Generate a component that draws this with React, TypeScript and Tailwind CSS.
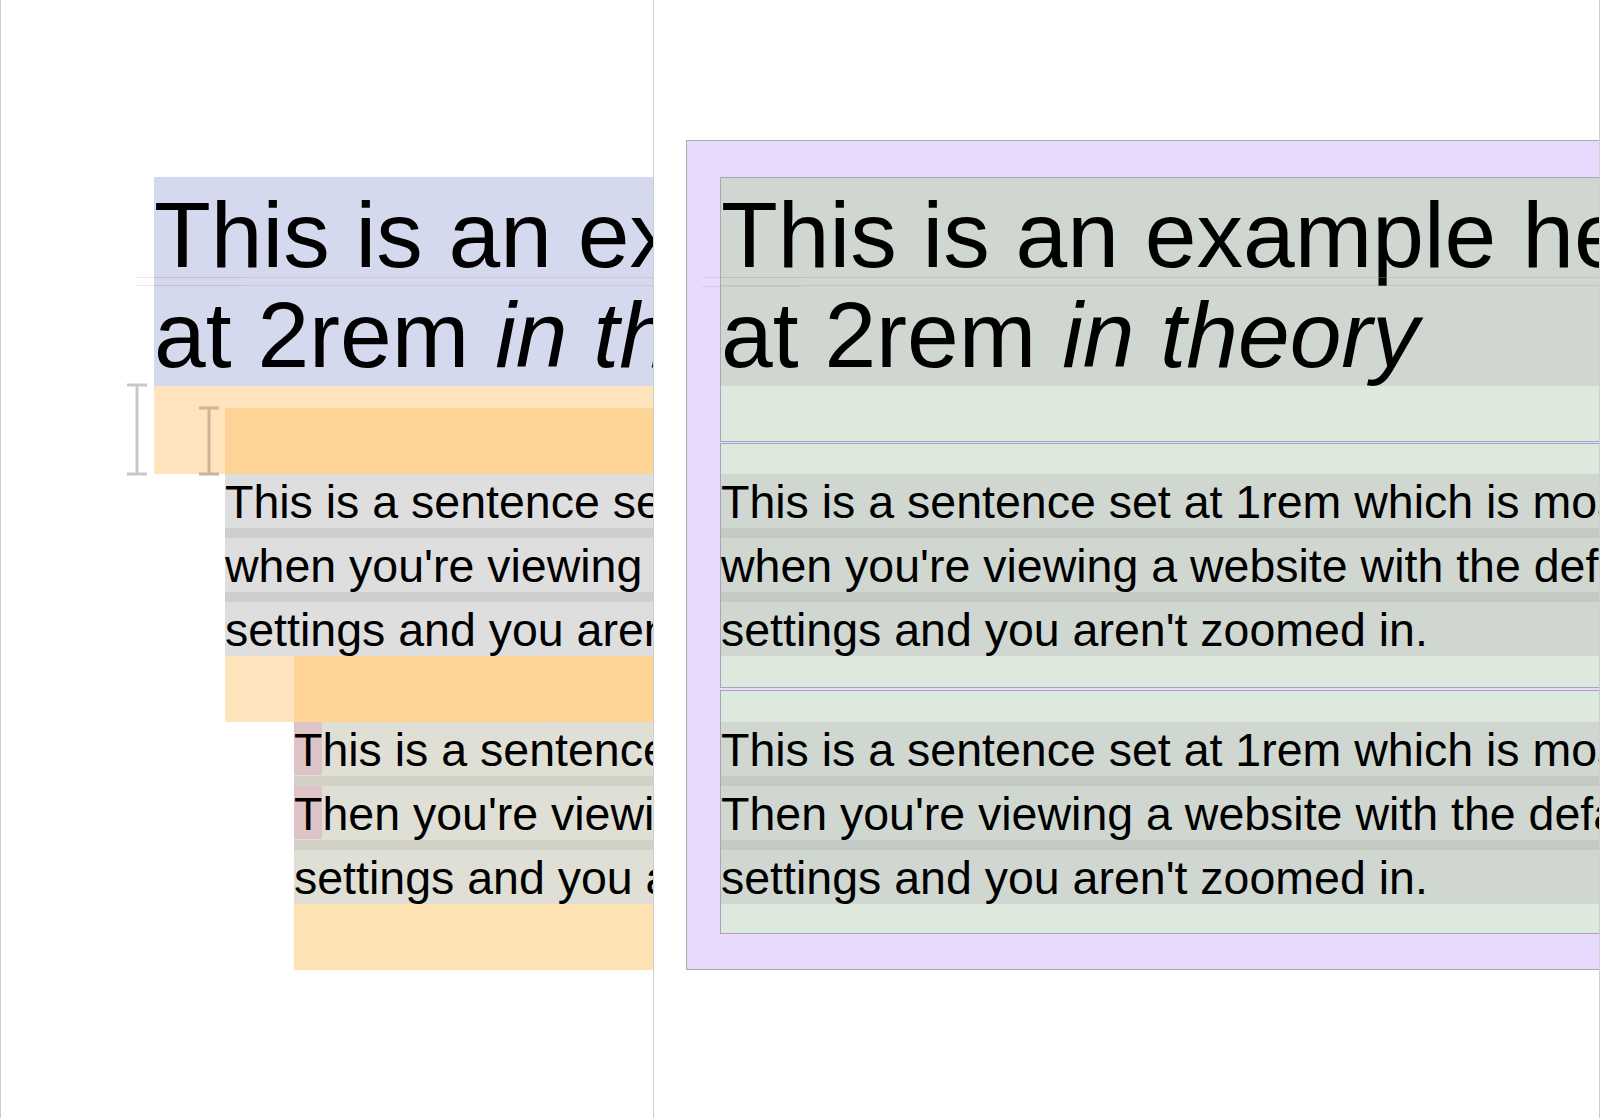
import React from "react";

const P1 = [
  "This is a sentence set at 1rem which is mostly 16px",
  "when you're viewing a website with the default",
  "settings and you aren't zoomed in.",
];
const P2 = [
  "This is a sentence set at 1rem which is mostly 16px",
  "Then you're viewing a website with the default",
  "settings and you aren't zoomed in.",
];

function Para({
  lines,
  light,
  dark,
  pinkT,
}: {
  lines: string[];
  light: string;
  dark: string;
  pinkT?: boolean;
}) {
  return (
    <div className={`flex flex-col gap-[10px] text-[46.5px] ${dark}`}>
      {lines.map((l, i) => (
        <div key={i} className={`h-[54px] leading-[56px] whitespace-nowrap ${light}`}>
          {pinkT && i < 2 ? (
            <>
              <span className="inline-block h-[53px] align-top leading-[56px] bg-[#dfc4c7]">{l[0]}</span>
              {l.slice(1)}
            </>
          ) : (
            l
          )}
        </div>
      ))}
    </div>
  );
}

function HeadingText() {
  return (
    <>
      <div>This is an example heading set</div>
      <div>
        at 2rem <em className="italic">in theory</em>
      </div>
    </>
  );
}

export default function App() {
  return (
    <div className="w-[1600px] h-[1118px] flex bg-white overflow-hidden text-black font-['Liberation_Sans',Arial,sans-serif]">
      {/* Left frame */}
      <div className="relative w-[654px] h-full shrink-0 border-l border-r border-[#cfcfcf] overflow-hidden pt-[177px]">
        <div className="pl-[153px]">
          <div className="relative h-[209px] pt-[7.5px] text-[93px] leading-[100px] whitespace-nowrap bg-[#d5d9ee]">
            <HeadingText />
            <div className="absolute left-0 right-0 top-[100px] h-px bg-[rgba(200,140,160,0.25)]" />
            <div className="absolute left-0 right-0 top-[108px] h-px bg-[rgba(200,140,160,0.25)]" />
          </div>
          <div className="bg-[#fee3bc] pt-[22px] pl-[71px]">
            <div className="h-[66px] bg-[#fed496]" />
          </div>
        </div>
        <div className="pl-[224px]">
          <Para lines={P1} light="bg-[#dedede]" dark="bg-[#cecece]" />
          <div className="bg-[#fee3bc] pl-[69px]">
            <div className="h-[66px] bg-[#fed496]" />
          </div>
        </div>
        <div className="pl-[293px]">
          <Para lines={P2} light="bg-[#dfdfd5]" dark="bg-[#d1d1c6]" pinkT />
          <div className="h-[66px] bg-[#fee2b4]" />
        </div>

        <div className="absolute left-[136px] w-[106px] top-[277px] h-px bg-[rgba(220,150,165,0.3)]" />
        <div className="absolute left-[136px] w-[106px] top-[285px] h-px bg-[rgba(220,150,165,0.3)]" />

        <svg className="absolute left-[125px] top-[383px]" width="100" height="94" viewBox="0 0 100 94">
          <g stroke="#c8c8c8" strokeWidth="3" fill="none">
            <line x1="11" y1="2" x2="11" y2="91" />
            <line x1="1" y1="2" x2="21" y2="2" />
            <line x1="1" y1="91" x2="21" y2="91" />
          </g>
          <g stroke="#c9b598" strokeWidth="3" fill="none">
            <line x1="83" y1="25" x2="83" y2="91" />
            <line x1="73" y1="25" x2="93" y2="25" />
            <line x1="73" y1="91" x2="93" y2="91" />
          </g>
        </svg>
      </div>

      {/* Right frame */}
      <div className="relative flex-1 h-full border-r border-[#cfcfcf] overflow-hidden pt-[140px] pl-[32px]">
        <div className="w-[1400px] bg-[#e8dafd] border border-[#ababab] pt-[36px] pl-[33px] pb-[35px] flex flex-col gap-[1px]">
          <div className="border border-[#a9a4b9]">
            <div className="relative h-[208px] pt-[6.5px] text-[93px] leading-[100px] whitespace-nowrap bg-[#d0d7d0]">
              <HeadingText />
              <div className="absolute left-0 right-0 top-[99px] h-px bg-[rgba(160,170,160,0.35)]" />
              <div className="absolute left-0 right-0 top-[107px] h-px bg-[rgba(160,170,160,0.35)]" />
            </div>
            <div className="h-[55px] bg-[#dce9dc]" />
          </div>
          <div className="border border-[#a9a4b9] bg-[#dce9dc] pt-[30px] pb-[31px]">
            <Para lines={P1} light="bg-[#d0d7d0]" dark="bg-[#c3cac3]" />
          </div>
          <div className="mt-[1px] border border-[#a9a4b9] bg-[#dce9dc] pt-[31px] pb-[29px]">
            <Para lines={P2} light="bg-[#d0d7d0]" dark="bg-[#c3cac3]" />
          </div>
        </div>

        <div className="absolute left-[48px] w-[101px] top-[277px] h-px bg-[rgba(220,150,165,0.3)]" />
        <div className="absolute left-[48px] w-[101px] top-[286px] h-px bg-[rgba(220,150,165,0.3)]" />
      </div>
    </div>
  );
}
